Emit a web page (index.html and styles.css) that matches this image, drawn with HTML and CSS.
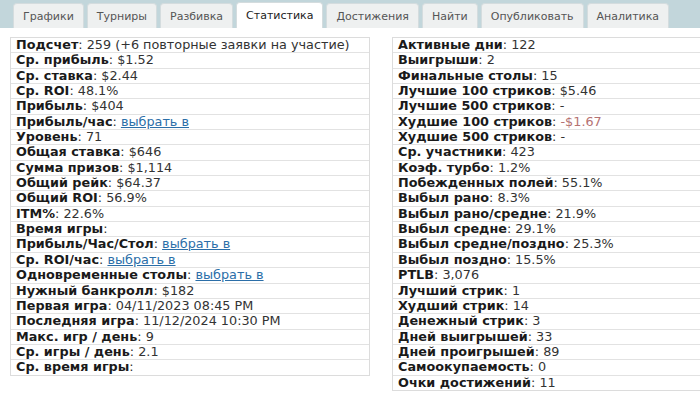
FILE: index.html
```html
<!DOCTYPE html>
<html lang="ru">
<head>
<meta charset="utf-8">
<link rel="stylesheet" href="styles.css">
</head>
<body>
<div class="tabbar">
  <div class="tab">Графики</div>
  <div class="tab">Турниры</div>
  <div class="tab">Разбивка</div>
  <div class="tab active">Статистика</div>
  <div class="tab">Достижения</div>
  <div class="tab">Найти</div>
  <div class="tab">Опубликовать</div>
  <div class="tab">Аналитика</div>
</div>
<div class="content">
  <div class="stats left">
    <div class="row"><b>Подсчет</b>: 259 (+6 повторные заявки на участие)</div>
    <div class="row"><b>Ср. прибыль</b>: $1.52</div>
    <div class="row"><b>Ср. ставка</b>: $2.44</div>
    <div class="row"><b>Ср. ROI</b>: 48.1%</div>
    <div class="row"><b>Прибыль</b>: $404</div>
    <div class="row"><b>Прибыль/час</b>: <a class="link">выбрать в</a></div>
    <div class="row"><b>Уровень</b>: 71</div>
    <div class="row"><b>Общая ставка</b>: $646</div>
    <div class="row"><b>Сумма призов</b>: $1,114</div>
    <div class="row"><b>Общий рейк</b>: $64.37</div>
    <div class="row"><b>Общий ROI</b>: 56.9%</div>
    <div class="row"><b>ITM%</b>: 22.6%</div>
    <div class="row"><b>Время игры</b>:</div>
    <div class="row"><b>Прибыль/Час/Стол</b>: <a class="link">выбрать в</a></div>
    <div class="row"><b>Ср. ROI/час</b>: <a class="link">выбрать в</a></div>
    <div class="row"><b>Одновременные столы</b>: <a class="link">выбрать в</a></div>
    <div class="row"><b>Нужный банкролл</b>: $182</div>
    <div class="row"><b>Первая игра</b>: 04/11/2023 08:45 PM</div>
    <div class="row"><b>Последняя игра</b>: 11/12/2024 10:30 PM</div>
    <div class="row"><b>Макс. игр / день</b>: 9</div>
    <div class="row"><b>Ср. игры / день</b>: 2.1</div>
    <div class="row"><b>Ср. время игры</b>:</div>
  </div>
  <div class="stats right">
    <div class="row"><b>Активные дни</b>: 122</div>
    <div class="row"><b>Выигрыши</b>: 2</div>
    <div class="row"><b>Финальные столы</b>: 15</div>
    <div class="row"><b>Лучшие 100 стриков</b>: $5.46</div>
    <div class="row"><b>Лучшие 500 стриков</b>: -</div>
    <div class="row"><b>Худшие 100 стриков</b>: <span class="neg">-$1.67</span></div>
    <div class="row"><b>Худшие 500 стриков</b>: -</div>
    <div class="row"><b>Ср. участники</b>: 423</div>
    <div class="row"><b>Коэф. турбо</b>: 1.2%</div>
    <div class="row"><b>Побежденных полей</b>: 55.1%</div>
    <div class="row"><b>Выбыл рано</b>: 8.3%</div>
    <div class="row"><b>Выбыл рано/средне</b>: 21.9%</div>
    <div class="row"><b>Выбыл средне</b>: 29.1%</div>
    <div class="row"><b>Выбыл средне/поздно</b>: 25.3%</div>
    <div class="row"><b>Выбыл поздно</b>: 15.5%</div>
    <div class="row"><b>PTLB</b>: 3,076</div>
    <div class="row"><b>Лучший стрик</b>: 1</div>
    <div class="row"><b>Худший стрик</b>: 14</div>
    <div class="row"><b>Денежный стрик</b>: 3</div>
    <div class="row"><b>Дней выигрышей</b>: 33</div>
    <div class="row"><b>Дней проигрышей</b>: 89</div>
    <div class="row"><b>Самоокупаемость</b>: 0</div>
    <div class="row"><b>Очки достижений</b>: 11</div>
  </div>
</div>
</body>
</html>
```
FILE: styles.css
```css
html, body {
  margin: 0;
  padding: 0;
  background: #fff;
  width: 700px;
  height: 418px;
  overflow: hidden;
  font-family: "DejaVu Sans", Verdana, sans-serif;
}
.tabbar {
  display: flex;
  align-items: flex-end;
  gap: 3px;
  height: 28px;
  padding-left: 13px;
  background: #c2d6db;
  box-sizing: border-box;
}
.tab {
  height: 25px;
  line-height: 25px;
  padding: 0 9px;
  font-size: 11px;
  color: #555;
  background: #eef0f0;
  border: 1px solid #d4dcde;
  border-bottom: none;
  border-radius: 4px 4px 0 0;
  box-sizing: border-box;
}
.tab.active {
  background: #fff;
  color: #222;
  height: 26px;
  line-height: 26px;
}
.content {
  display: flex;
  align-items: flex-start;
  padding: 9px 0 0 10px;
  gap: 22px;
}
.stats {
  border: 1px solid #dcdcdc;
  font-size: 12.8px;
  color: #333;
}
.stats.left { width: 358px; }
.stats.right { flex: 1; border-right: none; }
.row {
  line-height: 14.35px;
  padding-left: 5px;
  border-bottom: 1px solid #e2e2e2;
  white-space: nowrap;
}
.row:last-child { border-bottom: none; }
.row b { color: #1a1a1a; }
.link {
  color: #2b6ea8;
  text-decoration: underline;
}
.neg { color: #b57272; }
```
